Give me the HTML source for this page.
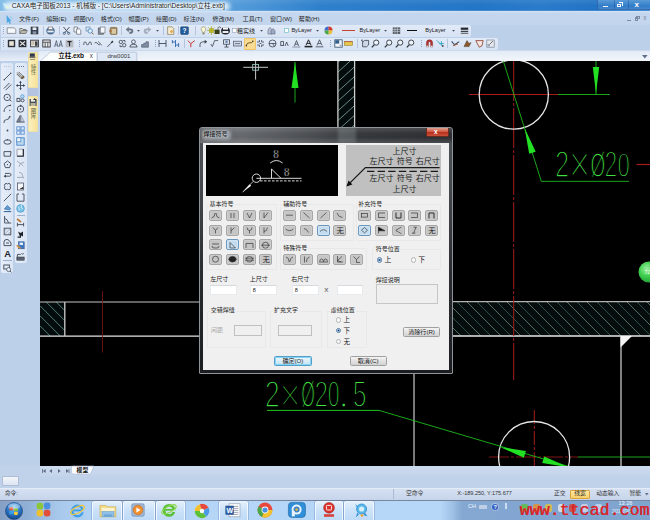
<!DOCTYPE html>
<html><head><meta charset="utf-8"><title>CAXA</title>
<style>
*{margin:0;padding:0;box-sizing:border-box}
html,body{width:650px;height:520px;overflow:hidden}
body{position:relative;background:#bdd0e9;font-family:"Liberation Sans","Noto Sans CJK SC",sans-serif;font-size:6px;color:#222;line-height:1}
.a{position:absolute}
.t{position:absolute;white-space:nowrap;line-height:1}
svg{position:absolute;overflow:visible}
#title{left:0;top:0;width:650px;height:12px;overflow:hidden;background:linear-gradient(rgba(255,255,255,.08),rgba(255,255,255,0) 45%,rgba(255,255,255,0) 80%,rgba(255,255,255,.35)),linear-gradient(90deg,#7db9e6 0,#6fb0e3 60px,#62a7df 200px,#4a94d6 260px,#2f80cc 320px,#2375c6 480px,#2a7bca 540px,#2273c5 600px,#2b7bca 650px)}
#menu{left:0;top:12px;width:650px;height:38px;background:#bcd0ea}
#tabs{left:0;top:50px;width:650px;height:11px;background:linear-gradient(#c9d7ec,#e8eff9)}
#left{left:0;top:61px;width:40px;height:415px;background:#bdd0e9}
#canvas{left:39.6px;top:61.1px;width:610.4px;height:405.2px;background:#000;overflow:hidden}
#bottom{left:0;top:466px;width:650px;height:34px;background:#bccbe4}
#task{left:0;top:500px;width:650px;height:20px;background:linear-gradient(90deg,#869fc4 0,#93b2d8 30px,#a9c9ec 60px,#b4d5f6 100px,#b6d7f7 440px,#a0c2e6 452px,#84a8d2 462px,#80a4cf 560px,#7fa5cf 650px)}
#dlg{left:199px;top:127px;width:254px;height:247px;overflow:hidden;background:linear-gradient(#4e5155 0,#45484c 25%,#2a2c2f 60%,#1b1d20 100%);border:1px solid #8f9499;border-radius:3px 3px 1px 1px}
#dtitle{left:0;top:0;width:252px;height:15px;background:linear-gradient(rgba(255,255,255,.14),rgba(255,255,255,.02) 35%,rgba(255,255,255,.0) 60%,rgba(255,255,255,.14)),linear-gradient(90deg,#585c60 0,#65696e 40px,#4a4d51 110px,#33363a 160px,#2b2d31 252px)}
#dcl{left:3px;top:15px;width:246.4px;height:226.6px;background:#f0f0f0}
.gb{position:absolute;border:1px solid #e8e8e8;border-radius:1px}
.sb{position:absolute;width:12.8px;height:11px;background:#c5c5c5;border:.9px solid #a6a6a6;border-radius:2px;box-shadow:inset 0 0 0 .6px #d2d2d2}
.sb.sel{background:#c4dcef;border-color:#6a97be;box-shadow:inset 0 0 0 .6px #dcebf6}
.inp{position:absolute;background:#fff;border:.7px solid #e8ebee;border-top-color:#d6dade}
.inp.dis{background:#f0f0f0;border:.9px solid #c0c0c0}
.btn{position:absolute;color:#1a1a1a;border:1px solid #a0a0a0;border-radius:1.5px;background:linear-gradient(#f4f4f4,#e2e2e2 50%,#d2d2d2);text-align:center}
.rad{position:absolute;width:5.2px;height:5.2px;margin:.2px;border-radius:50%;border:.7px solid #b0b3b6;background:#f8f8f8}
.rad.on{background:radial-gradient(circle,#1c3c66 0,#3f74ad 35%,#cfe0ef 60%,#eef3f8 100%);border-color:#5a7fa6}
</style></head><body>
<div id="title" class="a"></div>
<div id="menu" class="a"></div>
<div id="tabs" class="a"></div>
<div id="left" class="a"></div>
<div class="a" style="left:4px;top:1.6px;width:226px;height:9.6px;border-radius:5px;background:#fff;opacity:.8;filter:blur(2.2px)"></div><svg width="8" height="8" viewBox="0 0 8 8" style="left:2px;top:2px"><path d="M.6,1l3,6l1,-2l2,2l-1,-3l1.5,-1z" fill="#cfeefa"/><circle cx="5.5" cy="5.5" r="1.4" fill="#e8f6d8"/></svg><div class="t" style="left:11.8px;top:2.92px;font-size:6.57px;color:#222;text-shadow:0 0 2px #fff,0 0 3px #f4f8fc">CAXA电子图板2013 - 机械版 - [C:\Users\Administrator\Desktop\立柱.exb]</div><div class="a" style="left:597px;top:0;width:53px;height:9.5px;border:.8px solid rgba(30,80,150,.55);border-top:0;border-right:0;border-radius:0 0 0 3px;background:linear-gradient(#5a9ad8,#3c84cc 50%,#3079c4 52%,#3f88d0)"></div><div class="a" style="left:613.5px;top:0;width:.8px;height:9px;background:rgba(30,80,150,.45)"></div><div class="a" style="left:627.5px;top:0;width:.8px;height:9px;background:rgba(30,80,150,.45)"></div><div class="a" style="left:603px;top:5.5px;width:5px;height:1.6px;background:#f4f8ff"></div><div class="a" style="left:617px;top:3.6px;width:4.4px;height:3.6px;border:1px solid #f4f8ff"></div><div class="a" style="left:618.6px;top:2.2px;width:4.4px;height:3.6px;border:1px solid #f4f8ff;border-left:0;border-bottom:0"></div><div class="t" style="left:634.5px;top:0.60px;font-size:8px;color:#fff;font-weight:bold">x</div><div class="a" style="left:0;top:11.4px;width:650px;height:13.2px;background:linear-gradient(#d6e6f6 0,#c4d7ee 2px,#c2d5ec)"></div><svg width="9" height="10" viewBox="0 0 9 10" style="left:5px;top:13.5px"><path d="M1.5,1l5,6l-2,.3l1.5,2l-1.2,.6l-1.3,-2.2l-1.6,1.4z" fill="#4aa6e4"/><path d="M5,2.5l2.5,2" stroke="#7fcaf2" stroke-width="1"/></svg><div class="t" style="left:19px;top:15.55px;font-size:6.1px;color:#1e1e1e;">文件(F)</div><div class="t" style="left:46.2px;top:15.55px;font-size:6.1px;color:#1e1e1e;">编辑(E)</div><div class="t" style="left:73.4px;top:15.55px;font-size:6.1px;color:#1e1e1e;">视图(V)</div><div class="t" style="left:100.8px;top:15.55px;font-size:6.1px;color:#1e1e1e;">格式(O)</div><div class="t" style="left:128.4px;top:15.55px;font-size:6.1px;color:#1e1e1e;">幅面(P)</div><div class="t" style="left:156px;top:15.55px;font-size:6.1px;color:#1e1e1e;">绘图(D)</div><div class="t" style="left:183.6px;top:15.55px;font-size:6.1px;color:#1e1e1e;">标注(N)</div><div class="t" style="left:212.6px;top:15.55px;font-size:6.1px;color:#1e1e1e;">修改(M)</div><div class="t" style="left:242.6px;top:15.55px;font-size:6.1px;color:#1e1e1e;">工具(T)</div><div class="t" style="left:270px;top:15.55px;font-size:6.1px;color:#1e1e1e;">窗口(W)</div><div class="t" style="left:298.8px;top:15.55px;font-size:6.1px;color:#1e1e1e;">帮助(H)</div><div class="a" style="left:627px;top:19.6px;width:4.4px;height:1.2px;background:#7d8aa3"></div><div class="a" style="left:634.5px;top:17.2px;width:3.8px;height:3.4px;border:.8px solid #7d8aa3"></div><div class="a" style="left:636px;top:16px;width:3.8px;height:3.4px;border:.8px solid #7d8aa3"></div><div class="t" style="left:643.2px;top:15.00px;font-size:6.4px;color:#7d8aa3;">x</div><div class="a" style="left:1px;top:24.6px;width:470px;height:12px;background:linear-gradient(#e1eaf7,#d7e2f3);border-radius:0 2px 2px 0"></div><div class="a" style="left:1px;top:37.8px;width:497px;height:12px;background:linear-gradient(#e1eaf7,#d7e2f3);border-radius:0 2px 2px 0"></div><div class="a" style="left:3px;top:27px;width:1px;height:1px;background:#90a4c6"></div><div class="a" style="left:3px;top:29px;width:1px;height:1px;background:#90a4c6"></div><div class="a" style="left:3px;top:31px;width:1px;height:1px;background:#90a4c6"></div><div class="a" style="left:3px;top:33px;width:1px;height:1px;background:#90a4c6"></div><div class="a" style="left:3px;top:40px;width:1px;height:1px;background:#90a4c6"></div><div class="a" style="left:3px;top:42px;width:1px;height:1px;background:#90a4c6"></div><div class="a" style="left:3px;top:44px;width:1px;height:1px;background:#90a4c6"></div><div class="a" style="left:3px;top:46px;width:1px;height:1px;background:#90a4c6"></div><svg width="9" height="9" viewBox="0 0 9 9" style="left:7.0px;top:26.1px"><path d="M.2,1.8h6.8l1.8,1.6v4h-8.6z" fill="#f6f8fb" stroke="#7a808a" stroke-width=".8"/></svg><svg width="9" height="9" viewBox="0 0 9 9" style="left:18.5px;top:26.1px"><path d="M.8,7.5v-5h2.4l.8,1h3v1.2" fill="#e6e2cc" stroke="#5c6068" stroke-width=".8"/><path d="M.8,7.5l1.6,-3h6l-1.6,3z" fill="#b9b8a6" stroke="#5c6068" stroke-width=".7"/></svg><svg width="9" height="9" viewBox="0 0 9 9" style="left:30.1px;top:26.1px"><rect x="1" y="1" width="7" height="7" fill="#3c4656" stroke="#2a3240" stroke-width=".6"/><rect x="2.6" y="1.4" width="3.8" height="2.6" fill="#e8ecf2"/><rect x="2.8" y="5.4" width="3.4" height="2.4" fill="#8c96a6"/></svg><svg width="9" height="9" viewBox="0 0 9 9" style="left:45.9px;top:26.1px"><ellipse cx="4.5" cy="4.8" rx="4.2" ry="3.6" fill="#4a6c92"/><rect x="2.2" y="1" width="4.6" height="2.6" fill="#f4f6fa" stroke="#555" stroke-width=".5"/><rect x="1.4" y="4.6" width="6.2" height="1.8" fill="#e9eef5"/></svg><svg width="9" height="9" viewBox="0 0 9 9" style="left:61.5px;top:26.1px"><path d="M1.5,1l5,6M7.5,1l-5,6" stroke="#4b5360" stroke-width="1"/><circle cx="2.3" cy="7.3" r="1.1" fill="none" stroke="#33547a" stroke-width=".8"/><circle cx="6.7" cy="7.3" r="1.1" fill="none" stroke="#33547a" stroke-width=".8"/></svg><svg width="9" height="9" viewBox="0 0 9 9" style="left:73.3px;top:26.1px"><path d="M1,1h3.6v5h-3.6z" fill="#f4f6fa" stroke="#5c6672" stroke-width=".7"/><path d="M3.6,3h3l1.2,1.2v4h-4.2z" fill="#fff" stroke="#5c6672" stroke-width=".7"/></svg><svg width="9" height="9" viewBox="0 0 9 9" style="left:84.9px;top:26.1px"><rect x="1" y="1" width="4" height="4" fill="#cfe2f6" stroke="#5a7fa8" stroke-width=".6"/><circle cx="5.2" cy="5" r="2.2" fill="#dff0ff" stroke="#4a82b8" stroke-width=".8"/><path d="M6.8,6.6l1.6,1.8" stroke="#8a6a3a" stroke-width="1"/></svg><svg width="9" height="9" viewBox="0 0 9 9" style="left:96.5px;top:26.1px"><rect x="1.2" y="2" width="5.4" height="6.2" fill="#8a8f98" stroke="#4a4f58" stroke-width=".6"/><rect x="3.2" y="1" width="4.8" height="6" fill="#f6f7fa" stroke="#5c6672" stroke-width=".6"/></svg><svg width="9" height="9" viewBox="0 0 9 9" style="left:108.9px;top:26.1px"><rect x="1.2" y="1.4" width="6.8" height="7" rx="1" fill="#a58a5c" stroke="#6a5636" stroke-width=".6"/><rect x="2.6" y="3" width="4.4" height="4.8" fill="#d8c9a6"/><path d="M0,5h3" stroke="#b0662a" stroke-width="1"/></svg><svg width="9" height="9" viewBox="0 0 9 9" style="left:124.9px;top:26.1px"><path d="M1,3.6l2.6,-2.4v1.6h1.8q2.6,0 2.6,2.4q0,2.6 -3.4,2.4v-1.4q2,.2 2,-1.1q0,-1 -1.4,-1h-1.6v1.7z" fill="#6c7a8e" stroke="#46505e" stroke-width=".4"/></svg><svg width="9" height="9" viewBox="0 0 9 9" style="left:134.1px;top:26.1px"><path d="M3,4h3l-1.5,1.8z" fill="#4e5a6e"/></svg><svg width="9" height="9" viewBox="0 0 9 9" style="left:143.1px;top:26.1px"><path d="M8,3.6l-2.6,-2.4v1.6h-1.8q-2.6,0 -2.6,2.4q0,2.6 3.4,2.4v-1.4q-2,.2 -2,-1.1q0,-1 1.4,-1h1.6v1.7z" fill="#a9b3c2" stroke="#8893a3" stroke-width=".4"/></svg><svg width="9" height="9" viewBox="0 0 9 9" style="left:152.5px;top:26.1px"><path d="M3,4h3l-1.5,1.8z" fill="#4e5a6e"/></svg><svg width="9" height="9" viewBox="0 0 9 9" style="left:165.5px;top:26.1px"><path d="M1.6,.8h4.4l1.8,1.8v5.8h-6.2z" fill="#f3ead2" stroke="#8a7a56" stroke-width=".7"/><circle cx="5.6" cy="5.6" r="1.4" fill="#e6a23a"/></svg><svg width="9" height="9" viewBox="0 0 9 9" style="left:180.1px;top:26.1px"><rect x=".6" y=".8" width="7.8" height="7.6" rx=".8" fill="#1f5c9c" stroke="#123a66" stroke-width=".5"/><text x="2.6" y="7" font-size="6.6" font-weight="bold" fill="#fff" font-family="Liberation Sans,sans-serif">?</text></svg><svg width="9" height="9" viewBox="0 0 9 9" style="left:199.1px;top:26.1px"><path d="M4.5,.8a2.4,2.4 0 0 1 1.2,4.4v1.4h-2.4v-1.4a2.4,2.4 0 0 1 1.2,-4.4z" fill="#fdf8d8" stroke="#8a8450" stroke-width=".6"/><rect x="3.6" y="7" width="1.8" height="1.4" fill="#777"/></svg><svg width="9" height="9" viewBox="0 0 9 9" style="left:206.5px;top:26.1px"><circle cx="4.5" cy="4.5" r="2.2" fill="#e8e23a" stroke="#8a8a1a" stroke-width=".6"/><path d="M4.5,0v9M0,4.5h9M1.3,1.3l6.4,6.4M7.7,1.3l-6.4,6.4" stroke="#a8a820" stroke-width=".6"/></svg><svg width="9" height="9" viewBox="0 0 9 9" style="left:213.1px;top:26.1px"><rect x="1.6" y="3.6" width="5" height="4.4" fill="#3a3f1a"/><path d="M5,3.6v-1.4a1.4,1.4 0 0 1 2.8,0" fill="none" stroke="#555" stroke-width=".8"/></svg><svg width="9" height="9" viewBox="0 0 9 9" style="left:220.9px;top:26.1px"><ellipse cx="4.5" cy="4.8" rx="4.4" ry="3.8" fill="#20242a"/><rect x="2" y="1.2" width="5" height="2.4" fill="#f4f6fa"/><rect x="1.6" y="5" width="5.8" height="2" fill="#e9eef5"/></svg><svg width="9" height="9" viewBox="0 0 9 9" style="left:229.5px;top:26.1px"><rect x="2.4" y="2.4" width="4.2" height="4.2" fill="#fff" stroke="#8fa0b8" stroke-width=".6"/></svg><svg width="9" height="9" viewBox="0 0 9 9" style="left:256.9px;top:26.1px"><path d="M3,4h3l-1.5,1.8z" fill="#4e5a6e"/></svg><svg width="9" height="9" viewBox="0 0 9 9" style="left:267.1px;top:26.1px"><path d="M1,8v-4l2,-2.6l2,2.6v4z" fill="#b9c4d6" stroke="#5a6880" stroke-width=".6"/><path d="M4,8v-3.4l2,-2l2,2v3.4z" fill="#9dabc2" stroke="#5a6880" stroke-width=".6"/></svg><svg width="9" height="9" viewBox="0 0 9 9" style="left:282.1px;top:26.1px"><rect x="2.4" y="2.4" width="4.2" height="4.2" fill="#fff" stroke="#6fc0c8" stroke-width=".7"/></svg><svg width="9" height="9" viewBox="0 0 9 9" style="left:313.1px;top:26.1px"><path d="M3,4h3l-1.5,1.8z" fill="#4e5a6e"/></svg><svg width="9" height="9" viewBox="0 0 9 9" style="left:324.1px;top:26.1px"><circle cx="4.5" cy="4.5" r="4" fill="#d8d8d8"/><path d="M4.5,4.5l-4,0a4,4 0 0 1 4,-4z" fill="#3f6ed0"/><path d="M4.5,4.5l0,-4a4,4 0 0 1 4,4z" fill="#d23c2e"/><path d="M4.5,4.5l4,0a4,4 0 0 1 -4,4z" fill="#e8c23a"/><path d="M4.5,4.5l0,4a4,4 0 0 1 -4,-4z" fill="#48a84a"/></svg><svg width="9" height="9" viewBox="0 0 9 9" style="left:381.1px;top:26.1px"><path d="M3,4h3l-1.5,1.8z" fill="#4e5a6e"/></svg><svg width="9" height="9" viewBox="0 0 9 9" style="left:391.5px;top:26.1px"><rect x=".8" y="1.4" width="7.4" height="6.6" fill="#555c66"/><path d="M.8,3.4h7.4M.8,5.4h7.4M3,1.4v6.6M5.4,1.4v6.6" stroke="#cfd6e0" stroke-width=".6"/></svg><svg width="9" height="9" viewBox="0 0 9 9" style="left:449.1px;top:26.1px"><path d="M3,4h3l-1.5,1.8z" fill="#4e5a6e"/></svg><svg width="9" height="9" viewBox="0 0 9 9" style="left:459.5px;top:26.1px"><rect x=".8" y="1.6" width="7.4" height="2.2" fill="#23272e"/><rect x=".8" y="4.8" width="7.4" height="1.4" fill="#3a3f48"/><rect x=".8" y="7" width="7.4" height=".8" fill="#555"/></svg><div class="a" style="left:43px;top:26px;width:1px;height:9px;background:#b4c4de"></div><div class="a" style="left:59px;top:26px;width:1px;height:9px;background:#b4c4de"></div><div class="a" style="left:120.6px;top:26px;width:1px;height:9px;background:#b4c4de"></div><div class="a" style="left:163px;top:26px;width:1px;height:9px;background:#b4c4de"></div><div class="a" style="left:177.6px;top:26px;width:1px;height:9px;background:#b4c4de"></div><div class="a" style="left:194.6px;top:26px;width:1px;height:9px;background:#b4c4de"></div><div class="t" style="left:237px;top:27.70px;font-size:6px;color:#1a1a1a;">粗实线</div><div class="t" style="left:291.4px;top:27.90px;font-size:5.6px;color:#1a1a1a;">ByLayer</div><div class="a" style="left:342px;top:30.2px;width:13.4px;height:1px;background:#c2452e"></div><div class="t" style="left:359.6px;top:27.90px;font-size:5.6px;color:#1a1a1a;">ByLayer</div><div class="a" style="left:407px;top:29.8px;width:9.6px;height:1.6px;background:#111"></div><div class="t" style="left:425.2px;top:27.90px;font-size:5.6px;color:#1a1a1a;">ByLayer</div>
<div class="a" style="left:243.6px;top:38.2px;width:12px;height:11.4px;background:#f9dc92;border:1px solid #efc468;border-radius:1px"></div><svg width="9" height="9" viewBox="0 0 9 9" style="left:6.9px;top:39.3px"><rect x=".8" y=".8" width="7.4" height="7.4" fill="#2b2f36"/><rect x="2.2" y="2.2" width="4.6" height="4.6" fill="#e9e4d8"/></svg><svg width="9" height="9" viewBox="0 0 9 9" style="left:18.3px;top:39.3px"><rect x=".6" y=".8" width="7.8" height="7.4" fill="#2b2f36"/><path d="M2,2.4l5,4.2M7,2.4l-5,4.2" stroke="#f0f0f0" stroke-width="1.2"/></svg><svg width="9" height="9" viewBox="0 0 9 9" style="left:29.7px;top:39.3px"><rect x=".6" y="1.2" width="7.8" height="6.6" fill="#e8e4dc" stroke="#33373e" stroke-width=".9"/><rect x="5" y="2.4" width="2.6" height="4.4" fill="#3a3f48"/><path d="M1.4,3h3M1.4,5h3" stroke="#8a7a5a" stroke-width=".7"/></svg><svg width="9" height="9" viewBox="0 0 9 9" style="left:42.3px;top:39.3px"><rect x=".8" y="1" width="7.4" height="7" fill="#f2f2f2" stroke="#33373e" stroke-width=".9"/><path d="M.8,3.2h7.4M3.2,3.2v4.8M5.8,3.2v4.8" stroke="#33373e" stroke-width=".8"/></svg><svg width="9" height="9" viewBox="0 0 9 9" style="left:53.7px;top:39.3px"><path d="M.6,8l1.8,-6.4l1.6,6.4M1.2,6h2.2M5,8l1.8,-6.4l1.6,6.4M5.6,6h2.2" stroke="#3a465a" stroke-width=".7" fill="none"/></svg><svg width="9" height="9" viewBox="0 0 9 9" style="left:65.0px;top:39.3px"><rect x=".6" y=".8" width="7.8" height="7.6" fill="#b9bcc2"/><path d="M2.4,2.6h4.2M4.5,2.6v4.6" stroke="#22262c" stroke-width="1.1"/></svg><svg width="9" height="9" viewBox="0 0 9 9" style="left:83.2px;top:39.3px"><path d="M.8,6v-1.6q0,-1.4 1.3,-1.4q1.3,0 1.3,1.4v0q0,1.4 1.2,1.4q1.2,0 1.2,-1.4q0,-1.4 1.3,-1.4q1.2,0 1.2,1.4v1.6" stroke="#3a4250" fill="none" stroke-width=".8"/></svg><svg width="9" height="9" viewBox="0 0 9 9" style="left:94.3px;top:39.3px"><path d="M.6,4q1.6,-1.2 2.6,0l1,1.4q1,1 2,0M4.2,2.6l3.6,3.6" stroke="#3a4250" fill="none" stroke-width=".8"/></svg><svg width="9" height="9" viewBox="0 0 9 9" style="left:105.9px;top:39.3px"><path d="M1.4,7.8l3,-3" stroke="#3a4250" stroke-width=".9"/><path d="M4,5l2.2,-3.4l1.4,1.4z" fill="#22262c"/></svg><svg width="9" height="9" viewBox="0 0 9 9" style="left:117.5px;top:39.3px"><circle cx="2.8" cy="3" r="1.7" stroke="#3a4250" fill="none" stroke-width=".8"/><circle cx="6.2" cy="6.2" r="1.7" stroke="#3a4250" fill="none" stroke-width=".8"/><path d="M4.6,1.6h2.4v1.8M4.4,7.6h-2.4v-1.6" stroke="#3a4250" fill="none" stroke-width=".8"/></svg><svg width="9" height="9" viewBox="0 0 9 9" style="left:129.0px;top:39.3px"><circle cx="4.5" cy="2.8" r="1.9" stroke="#3a4250" fill="none" stroke-width=".8"/><path d="M.8,8q.2,-2.8 3.7,-2.8q3.5,0 3.7,2.8z" stroke="#3a4250" fill="none" stroke-width=".8"/></svg><svg width="9" height="9" viewBox="0 0 9 9" style="left:141.3px;top:39.3px"><path d="M.6,5.6h2.2v-1.4h2.2v-1.4h2.4v5.4h-6.8z" fill="#7f8da4" stroke="#4a5468" stroke-width=".6"/></svg><svg width="9" height="9" viewBox="0 0 9 9" style="left:158.2px;top:39.3px"><path d="M1,1v7M8,1v7M1,4.5h7" stroke="#3a4a60" stroke-width=".9" fill="none"/></svg><svg width="9" height="9" viewBox="0 0 9 9" style="left:171.3px;top:39.3px"><path d="M1.4,1v3.4M4.5,1v7M7.6,4v4M1.4,3h3M4.5,6h3.2" stroke="#2f66b0" stroke-width=".9" fill="none"/></svg><svg width="9" height="9" viewBox="0 0 9 9" style="left:186.5px;top:39.3px"><path d="M.8,1.6l3,3l4,-3M3.8,4.6v3.6" stroke="#c8372f" stroke-width="1" fill="none"/></svg><svg width="9" height="9" viewBox="0 0 9 9" style="left:198.5px;top:39.3px"><path d="M1,8v-2.6q0,-2.6 3,-2.6h2" stroke="#3a4250" fill="none" stroke-width=".8"/><path d="M5.6,.8l2.6,2l-2.6,2z" fill="#3a4250"/></svg><svg width="9" height="9" viewBox="0 0 9 9" style="left:210.1px;top:39.3px"><path d="M.8,5l1.6,2.6l2.2,-6h3.6" stroke="#3a4250" fill="none" stroke-width=".8"/></svg><svg width="9" height="9" viewBox="0 0 9 9" style="left:221.5px;top:39.3px"><rect x="1.6" y=".8" width="5.8" height="4.4" fill="#dfe6f0" stroke="#3a4250" stroke-width=".8"/><path d="M4.5,5.2v2.4M2.4,8h4.2" stroke="#3a4250" stroke-width=".9"/><rect x="3.4" y="1.8" width="2.2" height="2" fill="#5a7fb0"/></svg><svg width="9" height="9" viewBox="0 0 9 9" style="left:233.2px;top:39.3px"><rect x=".6" y="2.2" width="7.8" height="4.8" fill="#cdd6e4" stroke="#4a5468" stroke-width=".7"/><path d="M2,4.6h5" stroke="#4a5468" stroke-width=".7"/></svg><svg width="9" height="9" viewBox="0 0 9 9" style="left:244.9px;top:39.3px"><path d="M1,7q1,-3.6 3.4,-3.2q2,.6 3.8,-1.6" stroke="#5a4a1a" stroke-width=".9" fill="none"/><circle cx="1.4" cy="6.8" r=".7" fill="#333"/><circle cx="7.8" cy="2.2" r=".7" fill="#333"/></svg><svg width="9" height="9" viewBox="0 0 9 9" style="left:256.3px;top:39.3px"><path d="M1,3h2.4v-2M8,3h-2.4v-2M1,6h2.4v2M8,6h-2.4v2M3.6,4.5h1.8" stroke="#3a4250" fill="none" stroke-width=".8"/></svg><svg width="9" height="9" viewBox="0 0 9 9" style="left:267.8px;top:39.3px"><circle cx="4.5" cy="4.5" r="3.5" stroke="#3a4250" fill="none" stroke-width=".8"/><path d="M1,4.5h7M4.5,4.5l2,3" stroke="#3a4250" fill="none" stroke-width=".8"/></svg><svg width="9" height="9" viewBox="0 0 9 9" style="left:280.1px;top:39.3px"><rect x=".8" y="2.6" width="2.6" height="4" stroke="#3a4250" fill="none" stroke-width=".8"/><path d="M5,7l1.6,-4l1.6,4" stroke="#3a4250" fill="none" stroke-width=".8"/></svg><svg width="9" height="9" viewBox="0 0 9 9" style="left:292.0px;top:39.3px"><path d="M2.4,7l2.1,-5.4l2.1,5.4M3.2,5.2h2.6" stroke="#3a4250" fill="none" stroke-width=".8"/><path d="M.4,8h8" stroke="#3a4250" stroke-width=".5"/></svg><svg width="9" height="9" viewBox="0 0 9 9" style="left:303.5px;top:39.3px"><path d="M2,6.2l2.5,-5.4l2.5,5.4M3,4.4h3" stroke="#22262c" stroke-width="1" fill="none"/><rect x=".6" y="6.8" width="7.8" height="1.6" fill="#22262c"/></svg><svg width="9" height="9" viewBox="0 0 9 9" style="left:315.1px;top:39.3px"><path d="M2,6.4l2.5,-5.6l2.5,5.6M3,4.6h3" stroke="#3a4250" fill="none" stroke-width=".8"/><path d="M.6,7.8h7.8" stroke="#3a4250" stroke-width=".8"/></svg><svg width="9" height="9" viewBox="0 0 9 9" style="left:333.5px;top:39.3px"><rect x=".8" y=".8" width="7.4" height="7.4" fill="#f0f3f8" stroke="#33506e" stroke-width=".8"/><rect x="1.2" y="1.2" width="4" height="3.4" fill="#2f5f8a"/><path d="M5.6,6.4h1.8" stroke="#555" stroke-width=".6"/></svg><svg width="9" height="9" viewBox="0 0 9 9" style="left:344.3px;top:39.3px"><rect x=".4" y="2.6" width="8.2" height="3.8" fill="#e8c84a" stroke="#8a7420" stroke-width=".5"/><path d="M.4,2.6h8.2" stroke="#b03a2a" stroke-width=".6"/></svg><svg width="9" height="9" viewBox="0 0 9 9" style="left:360.5px;top:39.3px"><path d="M1.6,3l2,-1.6h4v4.6l-2,1.8h-4z" fill="#cfd8e6" stroke="#3a4250" stroke-width=".8"/><path d="M.4,1.4l2,1.4M1,.4v2" stroke="#3a4250" stroke-width=".8"/></svg><svg width="9" height="9" viewBox="0 0 9 9" style="left:371.3px;top:39.3px"><circle cx="5.2" cy="3.6" r="2.6" fill="#eef4fb" stroke="#2f3640" stroke-width=".9"/><path d="M3.4,5.6l-2.6,2.8" stroke="#2f3640" stroke-width="1.3"/></svg><svg width="9" height="9" viewBox="0 0 9 9" style="left:383.8px;top:39.3px"><circle cx="5.2" cy="3.6" r="2.6" fill="#eef4fb" stroke="#2f3640" stroke-width=".9"/><path d="M3.4,5.6l-2.6,2.8" stroke="#2f3640" stroke-width="1.3"/></svg><svg width="9" height="9" viewBox="0 0 9 9" style="left:394.5px;top:39.3px"><circle cx="5.2" cy="3.6" r="2.6" fill="#eef4fb" stroke="#2f3640" stroke-width=".9"/><path d="M3.4,5.6l-2.6,2.8" stroke="#2f3640" stroke-width="1.3"/></svg><svg width="9" height="9" viewBox="0 0 9 9" style="left:406.0px;top:39.3px"><circle cx="5.2" cy="3.6" r="2.6" fill="#eef4fb" stroke="#2f3640" stroke-width=".9"/><path d="M3.4,5.6l-2.6,2.8" stroke="#2f3640" stroke-width="1.3"/></svg><svg width="9" height="9" viewBox="0 0 9 9" style="left:425.0px;top:39.3px"><path d="M1.4,8v-4.2a3.1,3.1 0 0 1 6.2,0v4.2h-2v-4.2a1.1,1.1 0 0 0 -2.2,0v4.2z" fill="#b8332e" stroke="#6a1a18" stroke-width=".4"/><rect x="1.4" y="6.6" width="2" height="1.6" fill="#ddd"/><rect x="5.6" y="6.6" width="2" height="1.6" fill="#ddd"/></svg><svg width="9" height="9" viewBox="0 0 9 9" style="left:435.5px;top:39.3px"><path d="M.8,1.4l4,4M5.4,2.2v4.6M3.2,4.6h4.6" stroke="#3aa8c8" stroke-width="1" fill="none"/><path d="M6,6l2.4,1l-2.4,1z" fill="#333"/></svg><svg width="9" height="9" viewBox="0 0 9 9" style="left:451.2px;top:39.3px"><path d="M.6,2.4l3,3.4l4.6,-3.2" stroke="#33506e" stroke-width="1.1" fill="none"/><path d="M2,6.8l5,-2" stroke="#a85a2a" stroke-width="1"/></svg><svg width="9" height="9" viewBox="0 0 9 9" style="left:463.2px;top:39.3px"><path d="M1,7.6l3,-6l2,3l2,-1l-2,4z" fill="#8a5a2a" stroke="#4a3a2a" stroke-width=".5"/></svg><svg width="9" height="9" viewBox="0 0 9 9" style="left:475.2px;top:39.3px"><path d="M.8,1.6h7.4l-1.4,5.4l-2.6,1.2z" fill="#f3e6e0" stroke="#8a3a2a" stroke-width=".8"/></svg><svg width="9" height="9" viewBox="0 0 9 9" style="left:486.3px;top:39.3px"><rect x=".8" y="1" width="7.4" height="7.2" fill="#e6e9ee" stroke="#7a8698" stroke-width=".7"/><path d="M4,5l3,-3" stroke="#555" stroke-width=".8"/><rect x="1.4" y="5" width="2.6" height="2.4" fill="#9aa4b4"/></svg><div class="a" style="left:183.5px;top:39.4px;width:1px;height:9px;background:#b4c4de"></div><div class="a" style="left:356.5px;top:39.4px;width:1px;height:9px;background:#b4c4de"></div><div class="a" style="left:447.4px;top:39.4px;width:1px;height:9px;background:#b4c4de"></div><div class="a" style="left:79px;top:40.4px;width:1px;height:1px;background:#90a4c6"></div><div class="a" style="left:79px;top:42.4px;width:1px;height:1px;background:#90a4c6"></div><div class="a" style="left:79px;top:44.4px;width:1px;height:1px;background:#90a4c6"></div><div class="a" style="left:79px;top:46.4px;width:1px;height:1px;background:#90a4c6"></div><div class="a" style="left:154.7px;top:40.4px;width:1px;height:1px;background:#90a4c6"></div><div class="a" style="left:154.7px;top:42.4px;width:1px;height:1px;background:#90a4c6"></div><div class="a" style="left:154.7px;top:44.4px;width:1px;height:1px;background:#90a4c6"></div><div class="a" style="left:154.7px;top:46.4px;width:1px;height:1px;background:#90a4c6"></div><div class="a" style="left:329.6px;top:40.4px;width:1px;height:1px;background:#90a4c6"></div><div class="a" style="left:329.6px;top:42.4px;width:1px;height:1px;background:#90a4c6"></div><div class="a" style="left:329.6px;top:44.4px;width:1px;height:1px;background:#90a4c6"></div><div class="a" style="left:329.6px;top:46.4px;width:1px;height:1px;background:#90a4c6"></div><div class="a" style="left:421px;top:40.4px;width:1px;height:1px;background:#90a4c6"></div><div class="a" style="left:421px;top:42.4px;width:1px;height:1px;background:#90a4c6"></div><div class="a" style="left:421px;top:44.4px;width:1px;height:1px;background:#90a4c6"></div><div class="a" style="left:421px;top:46.4px;width:1px;height:1px;background:#90a4c6"></div>
<div class="a" style="left:39px;top:50.6px;width:611px;height:10.6px;background:linear-gradient(#e2ebf6,#f3f6fb)"></div><svg width="100" height="11" viewBox="39 50.6 100 11" style="left:39px;top:50.6px"><path d="M97.2,61.2v-8q0,-1.4 1.4,-1.4h36.6q1.6,0 1.6,1.4v8z" fill="#dfe8f5" stroke="#a9b9d3" stroke-width=".7"/><path d="M39.6,61.3l9.6,-8.6q1,-1 2.6,-1h43.6q1.6,0 1.6,1.4v8.2z" fill="#fdfefe" stroke="#a9b9d3" stroke-width=".7"/></svg><div class="t" style="left:58.2px;top:53.10px;font-size:6.6px;color:#111;font-weight:bold;letter-spacing:-.1px">立柱.exb</div><div class="t" style="left:89.8px;top:53.00px;font-size:6.4px;color:#444;">x</div><div class="t" style="left:107.4px;top:53.40px;font-size:6px;color:#333;">drw0001</div><svg width="6" height="4" viewBox="0 0 6 4" style="left:641.6px;top:55px"><path d="M0,0h5.6l-2.8,3.4z" fill="#5f6f8c"/></svg>
<div class="a" style="left:1.4px;top:63.4px;width:11.8px;height:209.6px;background:linear-gradient(90deg,#e6edf8,#dbe5f4);border-radius:2px"></div><div class="a" style="left:15px;top:63.4px;width:11.8px;height:199.6px;background:linear-gradient(90deg,#e6edf8,#dbe5f4);border-radius:2px"></div><div class="a" style="left:3.6px;top:66px;width:1px;height:1px;background:#b4c2da"></div><div class="a" style="left:17.4px;top:66px;width:1px;height:1px;background:#5f7396"></div><div class="a" style="left:5.6px;top:66px;width:1px;height:1px;background:#b4c2da"></div><div class="a" style="left:19.4px;top:66px;width:1px;height:1px;background:#5f7396"></div><div class="a" style="left:7.6px;top:66px;width:1px;height:1px;background:#b4c2da"></div><div class="a" style="left:21.4px;top:66px;width:1px;height:1px;background:#5f7396"></div><div class="a" style="left:9.6px;top:66px;width:1px;height:1px;background:#b4c2da"></div><div class="a" style="left:23.4px;top:66px;width:1px;height:1px;background:#5f7396"></div><div class="a" style="left:27.6px;top:51.6px;width:10.6px;height:36.4px;background:linear-gradient(90deg,#fbf0bd,#f6e29a);border:.6px solid #efe0a4;border-radius:1px"></div><div class="a" style="left:27.6px;top:88px;width:10.6px;height:8px;background:#b3c3e0"></div><div class="a" style="left:27.6px;top:95.6px;width:10.6px;height:36px;background:linear-gradient(90deg,#fbf0bd,#f6e29a);border:.6px solid #efe0a4;border-radius:1px"></div><svg width="7" height="8" viewBox="0 0 7 8" style="left:29.4px;top:53px"><rect x=".8" y=".4" width="5" height="3.4" fill="#2e3a4e"/><rect x=".4" y="3.8" width="6" height="1" fill="#555"/><path d="M1,6.4h5" stroke="#777" stroke-width=".8"/></svg><div class="t" style="left:30px;top:64px;font-size:5.4px;color:#6a6f4a;writing-mode:vertical-rl;letter-spacing:-.2px">特性</div><svg width="8" height="9" viewBox="0 0 8 9" style="left:28.8px;top:98px"><rect x=".6" y="1" width="7" height="7" fill="#4a505c"/><rect x="2" y="1" width="4" height="2.6" fill="#f1f1e6"/><rect x="1.6" y="5" width="5" height="3" fill="#b9b49a"/><path d="M5.6,0l1.6,2h-3.2z" fill="#333"/></svg><div class="t" style="left:30px;top:108px;font-size:5.4px;color:#5a5f4a;writing-mode:vertical-rl;letter-spacing:-.2px">图库</div><svg width="9" height="9" viewBox="0 0 9 9" style="left:2.8px;top:72.0px"><path d="M1,8l7,-7" stroke="#485060" fill="none" stroke-width=".95"/><circle cx="1.2" cy="7.8" r=".7" fill="#3e4656"/><circle cx="7.8" cy="1.2" r=".7" fill="#3e4656"/></svg><svg width="9" height="9" viewBox="0 0 9 9" style="left:2.8px;top:81.5px"><path d="M.8,6.6l5.6,-5.6M2.6,8.2l5.6,-5.6" stroke="#485060" fill="none" stroke-width=".95"/></svg><svg width="9" height="9" viewBox="0 0 9 9" style="left:2.8px;top:92.7px"><circle cx="4.2" cy="4.4" r="3.2" stroke="#485060" fill="none" stroke-width=".95"/><circle cx="4.2" cy="4.4" r=".6" fill="#3e4656"/><path d="M6.8,6.8l1.6,1.6" stroke="#485060" fill="none" stroke-width=".95"/></svg><svg width="9" height="9" viewBox="0 0 9 9" style="left:2.8px;top:104.1px"><path d="M1,8q0,-5.6 6.6,-6.8" stroke="#485060" fill="none" stroke-width=".95"/><circle cx="7.4" cy="1.4" r=".7" fill="#3e4656"/><circle cx="6.8" cy="6.4" r=".6" fill="#3e4656"/></svg><svg width="9" height="9" viewBox="0 0 9 9" style="left:2.8px;top:115.0px"><path d="M1,8q-.6,-3.4 2.6,-3.4q3,0 2.8,-3.2" stroke="#485060" fill="none" stroke-width=".95" stroke-width="1.4"/><path d="M6,1l2,.8l-1.6,1.2z" fill="#3e4656"/></svg><svg width="9" height="9" viewBox="0 0 9 9" style="left:2.8px;top:125.5px"><circle cx="4.5" cy="4.5" r=".9" fill="#3e4656"/></svg><svg width="9" height="9" viewBox="0 0 9 9" style="left:2.8px;top:136.5px"><ellipse cx="4.5" cy="5" rx="3.6" ry="2.2" stroke="#485060" fill="none" stroke-width=".95"/><circle cx="4.5" cy="2.8" r=".7" fill="#3e4656"/></svg><svg width="9" height="9" viewBox="0 0 9 9" style="left:2.8px;top:148.5px"><path d="M1,2.6h7l-.6,4.6h-6.4z" stroke="#485060" fill="none" stroke-width=".95"/></svg><svg width="9" height="9" viewBox="0 0 9 9" style="left:2.8px;top:160.0px"><path d="M4.5,1l3.4,2.6l-1.3,4h-4.2l-1.3,-4z" stroke="#485060" fill="none" stroke-width=".95"/><circle cx="4.5" cy="4.6" r=".6" fill="#3e4656"/></svg><svg width="9" height="9" viewBox="0 0 9 9" style="left:2.8px;top:171.0px"><path d="M2,2.4h4.6q1.4,0 1.4,1.4t-1.4,1.4h-5" stroke="#485060" fill="none" stroke-width=".95" stroke-width="1"/><path d="M3,3.6l-2.4,1.6l2.4,1.6z" fill="#3e4656"/></svg><svg width="9" height="9" viewBox="0 0 9 9" style="left:2.8px;top:181.5px"><path d="M2,2q1,-1.4 2.5,0q1.5,-1.4 2.5,0q1.4,1.2 0,2.6q1.4,1.4 0,2.6q-1,1.2 -2.5,0q-1.5,1.2 -2.5,0q-1.4,-1.2 0,-2.6q-1.4,-1.4 0,-2.6z" stroke="#485060" fill="none" stroke-width=".95"/></svg><svg width="9" height="9" viewBox="0 0 9 9" style="left:2.8px;top:192.5px"><path d="M.8,8.2l7.4,-7.4" stroke="#485060" fill="none" stroke-width=".95"/></svg><svg width="9" height="9" viewBox="0 0 9 9" style="left:2.8px;top:204.3px"><path d="M1.4,5l3,-3.6l3.2,3.2l-1,1.4z" fill="#5f9ed8" stroke="#2f5f94" stroke-width=".6"/><path d="M.8,7.6h7.4" stroke="#2f5f94" stroke-width="1"/></svg><svg width="9" height="9" viewBox="0 0 9 9" style="left:2.8px;top:215.3px"><path d="M1.6,1v7h6.6M1.6,3.4q3,.6 4,4.6" stroke="#485060" fill="none" stroke-width=".95"/></svg><svg width="9" height="9" viewBox="0 0 9 9" style="left:2.8px;top:226.5px"><rect x="1.2" y="1.2" width="6.6" height="6.6" stroke="#485060" fill="none" stroke-width=".95"/><path d="M1.2,4.4l3.2,-3.2M1.2,7.6l6.4,-6.4M4.4,7.8l3.4,-3.4" stroke="#7a8496" stroke-width=".6"/></svg><svg width="9" height="9" viewBox="0 0 9 9" style="left:2.8px;top:238.2px"><path d="M1,7.6v-3.6q0,-2.6 3,-2.6q2,0 4,3.6v2.6z" stroke="#485060" fill="none" stroke-width=".95"/><path d="M3,5h3" stroke="#485060" fill="none" stroke-width=".95"/></svg><svg width="9" height="9" viewBox="0 0 9 9" style="left:2.8px;top:249.0px"><text x="1.2" y="8" font-size="9.4" font-weight="bold" fill="#1e222a" font-family="Liberation Sans,sans-serif">A</text></svg><svg width="9" height="9" viewBox="0 0 9 9" style="left:2.8px;top:264.1px"><rect x=".8" y="1" width="5.6" height="4" stroke="#485060" fill="none" stroke-width=".95"/><circle cx="5.6" cy="5.6" r="2" fill="#e8eef8" stroke="#3e4656" stroke-width=".7"/><path d="M7,7l1.4,1.4" stroke="#485060" fill="none" stroke-width=".95"/></svg><div class="a" style="left:3px;top:260.4px;width:8.6px;height:.8px;background:#9fb0cf"></div><svg width="9" height="9" viewBox="0 0 9 9" style="left:16.4px;top:71.2px"><path d="M1,1.4l4.4,4.4M2.6,.8l4.2,4.2M.8,3l3.6,3.6" stroke="#4a4436" stroke-width=".8"/><path d="M4.2,7l3.6,-2.6l.8,2l-2.4,1.8z" fill="#6a5a3a"/></svg><svg width="9" height="9" viewBox="0 0 9 9" style="left:16.4px;top:81.2px"><path d="M4.5,.6v7.8M.6,4.5h7.8" stroke="#485060" fill="none" stroke-width=".95" stroke-width="1"/><path d="M4.5,0l1.4,1.8h-2.8zM4.5,9l1.4,-1.8h-2.8zM0,4.5l1.8,-1.4v2.8zM9,4.5l-1.8,-1.4v2.8z" fill="#2f3f5e"/></svg><svg width="9" height="9" viewBox="0 0 9 9" style="left:16.4px;top:93.5px"><circle cx="6.4" cy="2.4" r="1.7" fill="#bfe0f8" stroke="#3a8ad0" stroke-width=".7"/><rect x="1" y="4.4" width="3" height="3" stroke="#485060" fill="none" stroke-width=".95"/><circle cx="6.6" cy="6.4" r="1.5" stroke="#485060" fill="none" stroke-width=".95"/></svg><svg width="9" height="9" viewBox="0 0 9 9" style="left:16.4px;top:103.7px"><circle cx="4.5" cy="5" r="3.2" stroke="#485060" fill="none" stroke-width=".95"/><circle cx="4.5" cy="5" r=".8" fill="#3e4656"/><path d="M4,.6l2,1.2l-2,1.2z" fill="#3e4656"/></svg><svg width="9" height="9" viewBox="0 0 9 9" style="left:16.4px;top:114.3px"><path d="M4.3,1.2v6.4l-3.6,0z" fill="#7a8698" stroke="#3e4656" stroke-width=".6"/><path d="M4.9,1.2v6.4l3.4,0z" fill="#c9d2e0" stroke="#6a7488" stroke-width=".5"/><path d="M.4,8.2h8.2" stroke="#3e4656" stroke-width=".7"/></svg><svg width="9" height="9" viewBox="0 0 9 9" style="left:16.4px;top:125.5px"><rect x=".8" y=".8" width="3.2" height="3.2" fill="#e8f0fa" stroke="#5a8fd2" stroke-width=".9"/><rect x="5" y=".8" width="3.2" height="3.2" fill="#e8f0fa" stroke="#5a8fd2" stroke-width=".9"/><rect x=".8" y="5" width="3.2" height="3.2" fill="#e8f0fa" stroke="#5a8fd2" stroke-width=".9"/><rect x="5" y="5" width="3.2" height="3.2" fill="#e8f0fa" stroke="#5a8fd2" stroke-width=".9"/></svg><svg width="9" height="9" viewBox="0 0 9 9" style="left:16.4px;top:137.0px"><rect x=".8" y=".8" width="7.4" height="7.4" fill="#bcd8f0" stroke="#4a88c8" stroke-width=".9"/><rect x=".8" y=".8" width="4" height="4" fill="#f2f7fc" stroke="#4a88c8" stroke-width=".7"/></svg><svg width="9" height="9" viewBox="0 0 9 9" style="left:16.4px;top:147.8px"><path d="M1,1.2h6v6.6h-6z" fill="#f2f4f8" stroke="#6a7488" stroke-width=".6"/><path d="M7.4,1v7.2h-6.4" stroke="#2a2e36" stroke-width="1.1" fill="none"/></svg><svg width="9" height="9" viewBox="0 0 9 9" style="left:16.4px;top:159.3px"><path d="M1,2l3.4,2.4l3.6,-1M4.4,4.4l-1.4,3.4M4.4,4.4l3,2.6" stroke="#8a94a6" fill="none" stroke-width=".7"/></svg><svg width="9" height="9" viewBox="0 0 9 9" style="left:16.4px;top:169.5px"><path d="M1,7.4h6M3,2.4l2.6,.6l2,5.4" stroke="#8a94a6" fill="none" stroke-width=".7"/></svg><svg width="9" height="9" viewBox="0 0 9 9" style="left:16.4px;top:181.5px"><rect x="1.4" y="1" width="6" height="7" fill="#f4f6fa" stroke="#4e5668" stroke-width=".8"/><path d="M4.4,6.6h2.4v-1.4" stroke="#222" stroke-width="1"/></svg><svg width="9" height="9" viewBox="0 0 9 9" style="left:16.4px;top:192.5px"><path d="M3,1h-2v7.2h7v-7.2h-2" stroke="#485060" fill="none" stroke-width=".95" stroke-width="1"/></svg><svg width="9" height="9" viewBox="0 0 9 9" style="left:16.4px;top:204.3px"><circle cx="4.5" cy="4.5" r="3.8" fill="#7cc4ea" stroke="#2f88c0" stroke-width=".6"/><path d="M2,2.6q2,1.6 1,4M5.4,1q-1,3 1.8,4.4" stroke="#e6f4fc" stroke-width=".8" fill="none"/></svg><svg width="9" height="9" viewBox="0 0 9 9" style="left:16.4px;top:218.2px"><path d="M1,1l4,3" stroke="#b8763a" stroke-width="1.6"/><path d="M1.4,4.8v3.6M7.6,4.8v3.6M1.4,6.6h6.2" stroke="#485060" fill="none" stroke-width=".95"/></svg><svg width="9" height="9" viewBox="0 0 9 9" style="left:16.4px;top:229.7px"><path d="M2,1.4l2.5,1.6l2.5,-1.6v5l-2,-1v2.4h-3.4v-1.4h2.4z" fill="#1e222a"/></svg><svg width="9" height="9" viewBox="0 0 9 9" style="left:16.4px;top:241.3px"><rect x="2.4" y=".8" width="5.8" height="7" fill="#3f78c0" stroke="#2a4f86" stroke-width=".5"/><rect x="3.6" y="1.6" width="3.4" height="2.4" fill="#e6eef8"/><path d="M.6,4.4l4,3" stroke="#d8923a" stroke-width="1.6"/></svg><svg width="9" height="9" viewBox="0 0 9 9" style="left:16.4px;top:252.0px"><rect x=".8" y="5" width="7.4" height="3.2" fill="#5a6272" stroke="#2e3440" stroke-width=".5"/><path d="M1.4,5v-2.6h3.4" stroke="#485060" fill="none" stroke-width=".95"/><path d="M5.6,1.2l1,1.2l1,-1.2" stroke="#485060" fill="none" stroke-width=".95"/></svg><div class="a" style="left:16.6px;top:215px;width:8.6px;height:.8px;background:#9fb0cf"></div>
<div id="canvas" class="a"><svg width="650" height="520" viewBox="0 0 650 520" style="left:-39.6px;top:-61.1px">
<defs><clipPath id="c1"><rect x="338" y="61" width="16.6" height="70"/></clipPath><clipPath id="c2"><rect x="40" y="302" width="24.5" height="34"/></clipPath><clipPath id="c3"><rect x="450" y="302" width="200" height="34"/></clipPath></defs>
<rect x="338" y="61" width="16.6" height="70" fill="#050c0c"/>
<g clip-path="url(#c1)" stroke="#86aaa4" stroke-width=".8"><line x1="338" y1="52.6" x2="354.6" y2="37.6"/><line x1="338" y1="62.3" x2="354.6" y2="47.3"/><line x1="338" y1="72.0" x2="354.6" y2="57.0"/><line x1="338" y1="81.7" x2="354.6" y2="66.7"/><line x1="338" y1="91.4" x2="354.6" y2="76.4"/><line x1="338" y1="101.1" x2="354.6" y2="86.1"/><line x1="338" y1="110.8" x2="354.6" y2="95.8"/><line x1="338" y1="120.5" x2="354.6" y2="105.5"/><line x1="338" y1="130.2" x2="354.6" y2="115.2"/><line x1="338" y1="139.9" x2="354.6" y2="124.9"/><line x1="338" y1="149.6" x2="354.6" y2="134.6"/><line x1="338" y1="159.3" x2="354.6" y2="144.3"/></g>
<line x1="337.9" y1="61" x2="337.9" y2="131" stroke="#cfcfcf" stroke-width="1.3" />
<line x1="354.6" y1="61" x2="354.6" y2="131" stroke="#cfcfcf" stroke-width="1.3" />
<rect x="40" y="302" width="24.5" height="34" fill="#050c0c"/>
<g clip-path="url(#c2)" stroke="#5f9a90" stroke-width=".8"><line x1="40" y1="245.8" x2="65" y2="270.8"/><line x1="40" y1="255.8" x2="65" y2="280.8"/><line x1="40" y1="265.8" x2="65" y2="290.8"/><line x1="40" y1="275.8" x2="65" y2="300.8"/><line x1="40" y1="285.8" x2="65" y2="310.8"/><line x1="40" y1="295.8" x2="65" y2="320.8"/><line x1="40" y1="305.8" x2="65" y2="330.8"/><line x1="40" y1="315.8" x2="65" y2="340.8"/><line x1="40" y1="325.8" x2="65" y2="350.8"/><line x1="40" y1="335.8" x2="65" y2="360.8"/><line x1="40" y1="345.8" x2="65" y2="370.8"/><line x1="40" y1="355.8" x2="65" y2="380.8"/></g>
<line x1="40" y1="302" x2="200" y2="302" stroke="#c4c4c4" stroke-width="1.2" />
<line x1="40" y1="336.2" x2="200" y2="336.2" stroke="#e4e4e4" stroke-width="1.2" />
<line x1="64.8" y1="302" x2="64.8" y2="336" stroke="#d0d0d0" stroke-width="1.3" />
<line x1="102.5" y1="291" x2="102.5" y2="352.5" stroke="#7c1616" stroke-width="0.8" />
<rect x="450" y="302" width="200" height="34" fill="#050d0d"/>
<g clip-path="url(#c3)" stroke-width=".7"><line x1="397" y1="302" x2="431" y2="336" stroke="#3f6a64"/><line x1="407" y1="302" x2="441" y2="336" stroke="#7d9894"/><line x1="417" y1="302" x2="451" y2="336" stroke="#3f6a64"/><line x1="427" y1="302" x2="461" y2="336" stroke="#7d9894"/><line x1="437" y1="302" x2="471" y2="336" stroke="#3f6a64"/><line x1="447" y1="302" x2="481" y2="336" stroke="#7d9894"/><line x1="457" y1="302" x2="491" y2="336" stroke="#3f6a64"/><line x1="467" y1="302" x2="501" y2="336" stroke="#7d9894"/><line x1="477" y1="302" x2="511" y2="336" stroke="#3f6a64"/><line x1="487" y1="302" x2="521" y2="336" stroke="#7d9894"/><line x1="497" y1="302" x2="531" y2="336" stroke="#3f6a64"/><line x1="507" y1="302" x2="541" y2="336" stroke="#7d9894"/><line x1="517" y1="302" x2="551" y2="336" stroke="#3f6a64"/><line x1="527" y1="302" x2="561" y2="336" stroke="#7d9894"/><line x1="537" y1="302" x2="571" y2="336" stroke="#3f6a64"/><line x1="547" y1="302" x2="581" y2="336" stroke="#7d9894"/><line x1="557" y1="302" x2="591" y2="336" stroke="#3f6a64"/><line x1="567" y1="302" x2="601" y2="336" stroke="#7d9894"/><line x1="577" y1="302" x2="611" y2="336" stroke="#3f6a64"/><line x1="587" y1="302" x2="621" y2="336" stroke="#7d9894"/><line x1="597" y1="302" x2="631" y2="336" stroke="#3f6a64"/><line x1="607" y1="302" x2="641" y2="336" stroke="#7d9894"/><line x1="617" y1="302" x2="651" y2="336" stroke="#3f6a64"/><line x1="627" y1="302" x2="661" y2="336" stroke="#7d9894"/><line x1="637" y1="302" x2="671" y2="336" stroke="#3f6a64"/><line x1="647" y1="302" x2="681" y2="336" stroke="#7d9894"/><line x1="657" y1="302" x2="691" y2="336" stroke="#3f6a64"/><line x1="667" y1="302" x2="701" y2="336" stroke="#7d9894"/><line x1="677" y1="302" x2="711" y2="336" stroke="#3f6a64"/><line x1="687" y1="302" x2="721" y2="336" stroke="#7d9894"/></g>
<line x1="450" y1="301.6" x2="650" y2="301.6" stroke="#b4b4b4" stroke-width="1.3" />
<line x1="450" y1="336" x2="650" y2="336" stroke="#eaeaea" stroke-width="1.4" />
<line x1="621" y1="336" x2="621" y2="466" stroke="#c8c8c8" stroke-width="1.3" />
<polygon points="620.5,336 632,336 620.5,347.5" fill="#f4f4f4"/>
<line x1="414" y1="370" x2="414" y2="466" stroke="#f0f0f0" stroke-width="1" />
<line x1="513.7" y1="61" x2="513.7" y2="380" stroke="#a61c1c" stroke-width="1" stroke-dasharray="40 2 3 2"/>
<line x1="469" y1="94.5" x2="558" y2="94.5" stroke="#a61c1c" stroke-width="1" />
<line x1="636.5" y1="164.5" x2="650" y2="164.5" stroke="#a61c1c" stroke-width="1.2" />
<line x1="534.3" y1="410" x2="534.3" y2="466" stroke="#a61c1c" stroke-width="1" stroke-dasharray="14 2 3 2"/>
<line x1="489" y1="457" x2="578" y2="457" stroke="#a61c1c" stroke-width="0.8" stroke-dasharray="20 2 3 2"/>
<circle cx="513.8" cy="94.5" r="34.6" fill="none" stroke="#e6e6e6" stroke-width="1.3"/>
<circle cx="534.1" cy="457" r="35.5" fill="none" stroke="#e6e6e6" stroke-width="1.3"/>
<line x1="558" y1="94.5" x2="609.7" y2="94.5" stroke="#1fc41f" stroke-width="0.85" />
<line x1="596" y1="61" x2="596" y2="94.5" stroke="#1fc41f" stroke-width="0.85" />
<polygon points="592.8,67 599.2,67 596,93.5" fill="#22e022"/>
<line x1="295" y1="62" x2="295" y2="102.5" stroke="#1fc41f" stroke-width="0.85" />
<polygon points="295,62 298.5,88 291.5,88" fill="#22e022"/>
<line x1="503.3" y1="61" x2="541.3" y2="181.3" stroke="#1fc41f" stroke-width="0.85" />
<line x1="541.3" y1="181.3" x2="629" y2="181.3" stroke="#1fc41f" stroke-width="0.85" />
<polygon points="524.6,128.0 529.2,153.8 535.7,151.8" fill="#22e022"/>
<line x1="267" y1="410.4" x2="379" y2="410.4" stroke="#1fc41f" stroke-width="1" />
<line x1="379" y1="410.4" x2="572" y2="467.4" stroke="#1fc41f" stroke-width="0.85" />
<line x1="578" y1="457" x2="650" y2="457" stroke="#1fc41f" stroke-width="0.85" />
<polygon points="500.0,447.0 523.9,457.7 525.9,451.0" fill="#22e022"/>
<polygon points="568.1,467.1 542.2,463.1 544.2,456.4" fill="#22e022"/>
<line x1="243.3" y1="67.3" x2="268" y2="67.3" stroke="#c8c8c8" stroke-width="1" />
<line x1="255.6" y1="61" x2="255.6" y2="79.6" stroke="#c8c8c8" stroke-width="1" />
<rect x="252.7" y="64.4" width="5.8" height="5.8" fill="none" stroke="#9cc8c0" stroke-width=".9"/>
<defs><radialGradient id="gb" cx=".4" cy=".35" r=".7"><stop offset="0" stop-color="#9df0a0"/><stop offset=".5" stop-color="#3fd04f"/><stop offset="1" stop-color="#1f9a33"/></radialGradient></defs>
<circle cx="649" cy="272" r="10.5" fill="url(#gb)"/><text x="644.4" y="273.6" font-size="5" fill="#f4fff4" font-family="Liberation Sans,sans-serif">72</text>
<text font-family="Liberation Sans,sans-serif" font-size="100" fill="#3fe03f" stroke="#000" stroke-width="1.5" vector-effect="non-scaling-stroke" style="paint-order:fill stroke" transform="translate(554.88,177.19) scale(0.2549,0.3615)">2</text>
<text font-family="Liberation Sans,sans-serif" font-size="100" fill="#3fe03f" stroke="#000" stroke-width="2.5" vector-effect="non-scaling-stroke" style="paint-order:fill stroke" transform="translate(568.39,182.85) scale(0.3806,0.5495)">×</text>
<text font-family="Liberation Sans,sans-serif" font-size="100" fill="#3fe03f" stroke="#000" stroke-width="1.2" vector-effect="non-scaling-stroke" style="paint-order:fill stroke" transform="translate(590.54,176.72) scale(0.1893,0.3536)">Ø</text>
<text font-family="Liberation Sans,sans-serif" font-size="100" fill="#3fe03f" stroke="#000" stroke-width="1.5" vector-effect="non-scaling-stroke" style="paint-order:fill stroke" transform="translate(604.40,177.19) scale(0.2308,0.3615)">2</text>
<text font-family="Liberation Sans,sans-serif" font-size="100" fill="#3fe03f" stroke="#000" stroke-width="1.5" vector-effect="non-scaling-stroke" style="paint-order:fill stroke" transform="translate(617.58,177.03) scale(0.2222,0.3593)">0</text>
<text font-family="Liberation Sans,sans-serif" font-size="100" fill="#3fe03f" stroke="#000" stroke-width="1.5" vector-effect="non-scaling-stroke" style="paint-order:fill stroke" transform="translate(264.70,407.29) scale(0.2703,0.3687)">2</text>
<text font-family="Liberation Sans,sans-serif" font-size="100" fill="#3fe03f" stroke="#000" stroke-width="2.5" vector-effect="non-scaling-stroke" style="paint-order:fill stroke" transform="translate(278.89,412.00) scale(0.3806,0.4910)">×</text>
<text font-family="Liberation Sans,sans-serif" font-size="100" fill="#3fe03f" stroke="#000" stroke-width="1.2" vector-effect="non-scaling-stroke" style="paint-order:fill stroke" transform="translate(301.29,406.90) scale(0.1751,0.3617)">Ø</text>
<text font-family="Liberation Sans,sans-serif" font-size="100" fill="#3fe03f" stroke="#000" stroke-width="1.5" vector-effect="non-scaling-stroke" style="paint-order:fill stroke" transform="translate(314.43,407.29) scale(0.2440,0.3687)">2</text>
<text font-family="Liberation Sans,sans-serif" font-size="100" fill="#3fe03f" stroke="#000" stroke-width="1.5" vector-effect="non-scaling-stroke" style="paint-order:fill stroke" transform="translate(327.72,407.12) scale(0.2138,0.3663)">0</text>
<text font-family="Liberation Sans,sans-serif" font-size="100" fill="#3fe03f" stroke="#000" stroke-width="1.5" vector-effect="non-scaling-stroke" style="paint-order:fill stroke" transform="translate(338.11,407.29) scale(0.4105,0.3774)">.</text>
<text font-family="Liberation Sans,sans-serif" font-size="100" fill="#3fe03f" stroke="#000" stroke-width="1.5" vector-effect="non-scaling-stroke" style="paint-order:fill stroke" transform="translate(352.75,407.12) scale(0.2495,0.3687)">5</text>
</svg></div>
<div class="a" style="left:0;top:466.2px;width:650px;height:22px;background:#bfd2ea"></div><div class="a" style="left:39.6px;top:466.3px;width:611px;height:9.4px;background:linear-gradient(#cddbef,#c3d4eb)"></div><svg width="4" height="4" viewBox="0 0 4 4" style="left:41.6px;top:468.8px"><path d="M3.6,0v4l-2.6,-2z" fill="#5a6880"/><rect x="0" y="0" width=".8" height="4" fill="#5a6880"/></svg><svg width="4" height="4" viewBox="0 0 4 4" style="left:49.4px;top:468.8px"><path d="M3,0v4l-2.6,-2z" fill="#5a6880"/></svg><svg width="4" height="4" viewBox="0 0 4 4" style="left:58px;top:468.8px"><path d="M0,0v4l2.6,-2z" fill="#5a6880"/></svg><svg width="4" height="4" viewBox="0 0 4 4" style="left:65.6px;top:468.8px"><path d="M0,0v4l2.6,-2z" fill="#5a6880"/><rect x="2.6" y="0" width=".8" height="4" fill="#5a6880"/></svg><svg width="24" height="9" viewBox="0 0 24 9" style="left:71.4px;top:466.2px"><path d="M.4,0h22.6l-3.4,8.2h-17.2q-2,0 -2,-2z" fill="#f8fafd" stroke="#9fb0cf" stroke-width=".6"/></svg><div class="t" style="left:76.6px;top:467.50px;font-size:5.8px;color:#111;font-weight:bold">模型</div><div class="a" style="left:2px;top:476px;width:16.6px;height:10.4px;background:linear-gradient(#f2f5fa,#dde6f3);border:.6px solid #aebcd6;border-radius:1px"></div><div class="a" style="left:0;top:487.8px;width:650px;height:12.2px;background:linear-gradient(#d6e1f2,#c6d4ea);border-top:.8px solid #e4ecf7"></div><div class="t" style="left:5px;top:491.20px;font-size:5.6px;color:#222;">命令:</div><div class="a" style="left:393px;top:489.4px;width:.8px;height:9.4px;background:#a9b9d3"></div><div class="t" style="left:406px;top:491.00px;font-size:5.8px;color:#333;">空命令</div><div class="t" style="left:457.2px;top:491.15px;font-size:5.5px;color:#333;">X:-189.250, Y:175.677</div><div class="t" style="left:554px;top:491.00px;font-size:5.8px;color:#333;">正交</div><div class="a" style="left:570px;top:489.6px;width:20.4px;height:9px;background:linear-gradient(#fde9a8,#f8cf6a);border:.7px solid #dba43a;border-radius:1px"></div><div class="t" style="left:574.2px;top:491.00px;font-size:5.8px;color:#222;">线宽</div><div class="t" style="left:596.2px;top:491.00px;font-size:5.8px;color:#333;">动态输入</div><div class="t" style="left:629.4px;top:491.00px;font-size:5.8px;color:#333;">智能</div><svg width="4" height="3" viewBox="0 0 4 3" style="left:644.6px;top:493px"><path d="M0,0h3.6l-1.8,2.4z" fill="#5f6f8c"/></svg>
<div id="task" class="a"></div><div class="a" style="left:0;top:500px;width:650px;height:1px;background:#76859f"></div><div class="a" style="left:92.4px;top:500.6px;width:29.6px;height:19.4px;background:linear-gradient(rgba(255,255,255,.62),rgba(235,244,253,.42) 45%,rgba(210,228,248,.35));border:.8px solid rgba(255,255,255,.7);border-bottom:0;border-radius:2px 2px 0 0;box-shadow:0 0 0 .6px rgba(90,120,170,.5)"></div><div class="a" style="left:123px;top:500.6px;width:31.6px;height:19.4px;background:linear-gradient(rgba(255,255,255,.62),rgba(235,244,253,.42) 45%,rgba(210,228,248,.35));border:.8px solid rgba(255,255,255,.7);border-bottom:0;border-radius:2px 2px 0 0;box-shadow:0 0 0 .6px rgba(90,120,170,.5)"></div><div class="a" style="left:155.6px;top:500.6px;width:29.4px;height:19.4px;background:linear-gradient(rgba(255,255,255,.62),rgba(235,244,253,.42) 45%,rgba(210,228,248,.35));border:.8px solid rgba(255,255,255,.7);border-bottom:0;border-radius:2px 2px 0 0;box-shadow:0 0 0 .6px rgba(90,120,170,.5)"></div><div class="a" style="left:218.6px;top:500.6px;width:29.8px;height:19.4px;background:linear-gradient(rgba(255,255,255,.62),rgba(235,244,253,.42) 45%,rgba(210,228,248,.35));border:.8px solid rgba(255,255,255,.7);border-bottom:0;border-radius:2px 2px 0 0;box-shadow:0 0 0 .6px rgba(90,120,170,.5)"></div><div class="a" style="left:314.6px;top:500.6px;width:28.6px;height:19.4px;background:linear-gradient(rgba(255,255,255,.62),rgba(235,244,253,.42) 45%,rgba(210,228,248,.35));border:.8px solid rgba(255,255,255,.7);border-bottom:0;border-radius:2px 2px 0 0;box-shadow:0 0 0 .6px rgba(90,120,170,.5)"></div><div class="a" style="left:344.2px;top:500.6px;width:30.2px;height:19.4px;background:linear-gradient(rgba(255,255,255,.62),rgba(235,244,253,.42) 45%,rgba(210,228,248,.35));border:.8px solid rgba(255,255,255,.7);border-bottom:0;border-radius:2px 2px 0 0;box-shadow:0 0 0 .6px rgba(90,120,170,.5)"></div><svg width="18" height="18" viewBox="0 0 18 18" style="left:5px;top:501.5px"><defs><radialGradient id="orb" cx=".5" cy=".3" r=".75"><stop offset="0" stop-color="#8fd0f6"/><stop offset=".45" stop-color="#2f7fcf"/><stop offset="1" stop-color="#123a78"/></radialGradient></defs><circle cx="9" cy="9" r="8.6" fill="url(#orb)" stroke="#2a4f86" stroke-width=".6"/><path d="M4.4,5.6q2,-1 3.8,0v3q-1.8,-1 -3.8,0z" fill="#e8502e"/><path d="M9,5.8q2,1 3.8,0v3q-1.8,1 -3.8,0z" fill="#7fc23a"/><path d="M4.4,9.4q2,-1 3.8,0v3q-1.8,-1 -3.8,0z" fill="#3aa0e8"/><path d="M9,9.6q2,1 3.8,0v3q-1.8,1 -3.8,0z" fill="#f6c83a"/><ellipse cx="9" cy="4.4" rx="6" ry="3" fill="rgba(255,255,255,.35)"/></svg><svg width="15" height="15" viewBox="0 0 15 15" style="left:35.6px;top:502.4px"><rect x=".6" y=".8" width="6.6" height="6.6" rx="2.4" fill="#8cc63a"/><rect x="7.8" y=".6" width="6.6" height="6.6" rx="2.4" fill="#4a8fe0"/><rect x=".6" y="7.8" width="6.6" height="6.6" rx="2.4" fill="#f0c030"/><rect x="7.8" y="7.8" width="6.6" height="6.6" rx="2.4" fill="#e0503a"/></svg><svg width="15" height="15" viewBox="0 0 15 15" style="left:69.6px;top:502.6px"><circle cx="7.5" cy="8" r="5.2" fill="none" stroke="#3fa0e8" stroke-width="2.6"/><rect x="7" y="7.2" width="7" height="2.2" fill="#a9cbee"/><path d="M3.4,7.4h8.6" stroke="#3fa0e8" stroke-width="1.8"/><ellipse cx="7.5" cy="7" rx="7.6" ry="3" fill="none" stroke="#f0c63a" stroke-width="1.1" transform="rotate(-28 7.5 7)"/></svg><svg width="18" height="15" viewBox="0 0 18 15" style="left:98.6px;top:502.6px"><path d="M1,2.4h6l1.2,1.4h8.6v10h-15.8z" fill="#f4dc8a" stroke="#c8a84a" stroke-width=".6"/><rect x="2.6" y="5" width="12.6" height="6" fill="#fbf3cf"/><rect x="3" y="8.6" width="12" height="5" fill="#8fc0e8" stroke="#5a90c0" stroke-width=".5"/><rect x="5" y="11.4" width="8" height="2.4" fill="#6aa6d8"/></svg><svg width="14" height="14" viewBox="0 0 14 14" style="left:131.4px;top:503px"><rect x=".8" y=".8" width="12.4" height="12.4" rx="1.4" fill="#9fb8d8" stroke="#6a86ad" stroke-width=".6"/><circle cx="7" cy="7" r="4.8" fill="#f09030" stroke="#c86a1a" stroke-width=".6"/><path d="M5.4,4.4l4.2,2.6l-4.2,2.6z" fill="#fff"/></svg><svg width="16" height="16" viewBox="0 0 16 16" style="left:161.4px;top:502.4px"><circle cx="8" cy="8.4" r="5" fill="none" stroke="#5cc03a" stroke-width="2.8"/><rect x="7.6" y="7.8" width="7" height="2.2" fill="#cfe2f6"/><path d="M4,7.8h8.6" stroke="#5cc03a" stroke-width="1.8"/><ellipse cx="8" cy="7.4" rx="8" ry="3" fill="none" stroke="#8fd84a" stroke-width="1.1" transform="rotate(-28 8 7.4)"/></svg><svg width="16" height="16" viewBox="0 0 16 16" style="left:194px;top:502.6px"><circle cx="8" cy="8" r="7.2" fill="#f2f2f2"/><path d="M8,8l-7.2,0a7.2,7.2 0 0 1 5,-6.8z" fill="#f0c02e"/><path d="M8,8l-2.2,-6.8a7.2,7.2 0 0 1 8.8,3.6z" fill="#e8483a"/><path d="M8,8l6.6,-3.2a7.2,7.2 0 0 1 -2.4,9z" fill="#4a9ae8"/><path d="M8,8l4.2,5.8a7.2,7.2 0 0 1 -11.4,-5.8z" fill="#5cc03a"/><circle cx="8" cy="8" r="2.2" fill="#fdfdfd"/></svg><svg width="16" height="15" viewBox="0 0 16 15" style="left:225.4px;top:502.6px"><rect x="4" y=".8" width="11" height="13" fill="#fdfdfd" stroke="#8a96aa" stroke-width=".6"/><path d="M6,3.4h7.4M6,5.4h7.4M6,7.4h7.4M6,9.4h7.4M6,11.4h7.4" stroke="#7a86a0" stroke-width=".7"/><rect x=".8" y="3" width="7.6" height="8.4" fill="#2f5fa8" stroke="#1e3f78" stroke-width=".5"/><text x="1.4" y="9.8" font-size="7" font-weight="bold" fill="#fff" font-family="Liberation Sans,sans-serif">W</text></svg><svg width="16" height="16" viewBox="0 0 16 16" style="left:257px;top:502.4px"><circle cx="8" cy="8" r="7.4" fill="#e8483a"/><path d="M8,8l-6.4,-3.7a7.4,7.4 0 0 0 3.4,10.6z" fill="#4aa84a"/><path d="M8,8l-3,6.9a7.4,7.4 0 0 0 10.4,-6.9z" fill="#f2c42e"/><circle cx="8" cy="8" r="3.4" fill="#fdfdfd"/><circle cx="8" cy="8" r="2.6" fill="#4a8fe0"/></svg><svg width="18" height="16" viewBox="0 0 18 16" style="left:288px;top:501.8px"><rect x=".4" y=".4" width="17" height="15" rx="3.4" fill="#2f8fd8" stroke="#1e5fa0" stroke-width=".6"/><circle cx="8.6" cy="7.6" r="5" fill="#e8f2fb"/><circle cx="8.6" cy="7.6" r="3" fill="#3a7fc8"/><circle cx="8.6" cy="7.6" r="1.4" fill="#d8b84a"/><rect x="3.8" y="9" width="3" height="5.4" fill="#e8f2fb"/></svg><svg width="14" height="16" viewBox="0 0 14 16" style="left:321.6px;top:502.4px"><circle cx="7" cy="5.8" r="5.4" fill="#d8302a" stroke="#a01e1a" stroke-width=".5"/><rect x="4.4" y="3.4" width="5.2" height="4.6" rx=".8" fill="none" stroke="#fbe9e6" stroke-width="1"/><rect x="2" y="12.2" width="10" height="2.6" fill="#d8403a"/></svg><svg width="17" height="17" viewBox="0 0 17 17" style="left:352.6px;top:502px"><path d="M2,2l4,3l-1,2z" fill="#2f8fd8"/><circle cx="8.6" cy="7" r="5" fill="#5ab8e8" stroke="#2f8fd0" stroke-width=".8"/><circle cx="8.6" cy="7" r="2.6" fill="#d6effa"/><path d="M4.4,10.6l-1.6,4.6l3,-2.4zM12,10.6l2.4,4l-3.8,-1.6z" fill="#2f8fd8"/><path d="M7,12.6l2,3l2,-3z" fill="#f0a030"/></svg><div class="t" style="left:468px;top:504.30px;font-size:5.4px;color:#f4f8ff;">CH</div><div class="a" style="left:479.4px;top:505.4px;width:7.4px;height:3.6px;background:#c9d6ea;border-radius:.6px;opacity:.85"></div><svg width="8" height="8" viewBox="0 0 8 8" style="left:491.2px;top:503.4px"><circle cx="4" cy="4" r="3.6" fill="#2f5fc0" stroke="#e8f0fb" stroke-width=".6"/><text x="2.4" y="6.2" font-size="5.6" font-weight="bold" fill="#fff" font-family="Liberation Sans,sans-serif">?</text></svg><div class="a" style="left:505px;top:503.4px;width:2.4px;height:6px;background:#dfe8f6;opacity:.8"></div><div class="a" style="left:521px;top:504.4px;width:7px;height:7.6px;background:#5fbf3a;border-radius:2px;opacity:.8"></div><div class="a" style="left:533px;top:504.4px;width:7px;height:7.6px;background:#e8902a;border-radius:2px;opacity:.8"></div><div class="a" style="left:545px;top:504.4px;width:7px;height:7.6px;background:#e0c23a;border-radius:2px;opacity:.8"></div><div class="a" style="left:557.6px;top:504.4px;width:7px;height:7.6px;background:#e8e8e8;border-radius:2px;opacity:.8"></div><div class="a" style="left:569px;top:504.4px;width:7px;height:7.6px;background:#e0402a;border-radius:2px;opacity:.8"></div><div class="a" style="left:581px;top:504.4px;width:7px;height:7.6px;background:#d8d8e8;border-radius:2px;opacity:.8"></div><div class="a" style="left:595px;top:504.4px;width:7px;height:7.6px;background:#cfd8ea;border-radius:2px;opacity:.8"></div><div class="t" style="left:618.4px;top:500.80px;font-size:5.6px;color:#f4f8ff;">13:26</div><div class="t" style="left:612px;top:509.00px;font-size:5.2px;color:#e4ecf8;">2013/9/5</div><div class="t" style="left:519.6px;top:501.4px;font-family:'Liberation Mono',monospace;font-size:16.67px;color:#d8262e;line-height:19px;text-shadow:.3px 0 0 #d8262e">www.ttcad.com</div>
<div id="dlg" class="a"><div id="dtitle" class="a"></div><div class="a" style="left:138px;top:0;width:18px;height:15px;background:rgba(190,205,205,.22);filter:blur(1.6px)"></div>
<div class="a" style="left:2px;top:2.4px;width:29px;height:9.6px;border-radius:4px;background:rgba(215,220,225,.5);filter:blur(1.6px)"></div><div class="t" style="left:3.6px;top:3.4px;font-size:6px;color:#0c0d0f;font-weight:500;text-shadow:0 0 1.5px #d4d8dc,0 0 2.5px #c4c8cc">焊接符号</div>
<div class="a" style="left:225.5px;top:0;width:23.5px;height:8.5px;border-radius:0 0 2px 2px;background:linear-gradient(#e0a090,#cf5a45 45%,#b8321c 55%,#c9503a);border:1px solid #6a2a20;border-top:0"></div>
<div class="t" style="left:234px;top:1.2px;font-size:6.5px;font-weight:bold;color:#fff">x</div>
<div id="dcl" class="a"></div>
<div class="a" style="left:5.5px;top:17.2px;width:132px;height:50.4px;background:#000"></div>
<div class="a" style="left:146px;top:17.2px;width:95.2px;height:50.4px;background:#c0c0c0"></div>
<svg width="254" height="247" viewBox="200 128 254 247" style="left:0;top:0"><g stroke="#f0f0f0" stroke-width=".9" fill="none"><circle cx="256.4" cy="178.2" r="4.2"/><line x1="256.4" y1="178.3" x2="301.5" y2="178.3"/><line x1="260" y1="180.9" x2="301.5" y2="180.9" stroke-dasharray="2.6 1.4"/><polyline points="271.5,178.3 271.5,169 281,178.3"/><path d="M270.2,163 Q276.3,158 282.6,163"/><line x1="253.4" y1="181.2" x2="242.5" y2="192.3" stroke-width=".7"/></g><polygon points="242.6,192.2 249.6,184.3 251.2,185.7" fill="#f4f4f4"/><text font-family="Liberation Sans,sans-serif" font-size="100" fill="#f2f2f2" stroke="#000" stroke-width=".35" vector-effect="non-scaling-stroke" style="paint-order:fill stroke" transform="translate(273.37,157.81) scale(0.1002,0.1033)">8</text><text font-family="Liberation Sans,sans-serif" font-size="100" fill="#f2f2f2" stroke="#000" stroke-width=".35" vector-effect="non-scaling-stroke" style="paint-order:fill stroke" transform="translate(283.88,175.59) scale(0.0981,0.1174)">8</text><g stroke="#1a1a1a" fill="none"><polyline points="439.6,167.6 365.4,167.6 347.2,185.6" stroke-width="1.3"/><line x1="367" y1="171.3" x2="439.3" y2="171.3" stroke-width="1.2" stroke-dasharray="7.4 3.2"/></g><polygon points="346.4,186.6 348.6,180.6 352.4,184.4" fill="#111"/></svg>
<div class="t" style="left:192.4px;top:20.00px;font-size:8px;color:#1e1e1e;">上尺寸</div>
<div class="t" style="left:169.6px;top:30.00px;font-size:8px;color:#1e1e1e;word-spacing:.85px">左尺寸 符号 右尺寸</div>
<div class="t" style="left:169.6px;top:46.80px;font-size:8px;color:#1e1e1e;word-spacing:.85px">左尺寸 符号 右尺寸</div>
<div class="t" style="left:192.4px;top:57.60px;font-size:8px;color:#1e1e1e;">上尺寸</div>
<div class="gb" style="left:6px;top:75.5px;width:71px;height:66.0px"></div>
<div class="t" style="left:8.4px;top:72.60px;font-size:6px;color:#222;background:#f0f0f0;padding:0 1px;">基本符号</div>
<div class="gb" style="left:80px;top:75.5px;width:73.5px;height:37.0px"></div>
<div class="t" style="left:82.2px;top:72.60px;font-size:6px;color:#222;background:#f0f0f0;padding:0 1px;">辅助符号</div>
<div class="gb" style="left:155.5px;top:75.5px;width:85.5px;height:37.0px"></div>
<div class="t" style="left:157.2px;top:72.60px;font-size:6px;color:#222;background:#f0f0f0;padding:0 1px;">补充符号</div>
<div class="gb" style="left:80px;top:120px;width:86.5px;height:21.5px"></div>
<div class="t" style="left:82.2px;top:117.20px;font-size:6px;color:#222;background:#f0f0f0;padding:0 1px;">特殊符号</div>
<div class="gb" style="left:172px;top:120.5px;width:69px;height:21.0px"></div>
<div class="t" style="left:174.8px;top:117.60px;font-size:6px;color:#222;background:#f0f0f0;padding:0 1px;">符号位置</div>
<div class="sb" style="left:9.4px;top:82px"><svg width="13" height="10.4" viewBox="0 0 13 10.4" style="left:-1px;top:-.6px"><g fill="none" stroke="#2e2e2e" stroke-width=".65" ><path d="M2.5,8 Q6,7.5 6,3 M10.5,8 Q7,7.5 7,3"/></g></svg></div>
<div class="sb" style="left:26.07px;top:82px"><svg width="13" height="10.4" viewBox="0 0 13 10.4" style="left:-1px;top:-.6px"><g fill="none" stroke="#2e2e2e" stroke-width=".65" ><path d="M5,3v5M8,3v5"/></g></svg></div>
<div class="sb" style="left:42.74px;top:82px"><svg width="13" height="10.4" viewBox="0 0 13 10.4" style="left:-1px;top:-.6px"><g fill="none" stroke="#2e2e2e" stroke-width=".65" ><path d="M4,3l2.5,5l2.5,-5"/></g></svg></div>
<div class="sb" style="left:59.41px;top:82px"><svg width="13" height="10.4" viewBox="0 0 13 10.4" style="left:-1px;top:-.6px"><g fill="none" stroke="#2e2e2e" stroke-width=".65" ><path d="M5,2.5v5.5M5,8l4,-5.5"/></g></svg></div>
<div class="sb" style="left:9.4px;top:96.6px"><svg width="13" height="10.4" viewBox="0 0 13 10.4" style="left:-1px;top:-.6px"><g fill="none" stroke="#2e2e2e" stroke-width=".65" ><path d="M4,2.5l2.5,3l2.5,-3M6.5,5.5v3"/></g></svg></div>
<div class="sb" style="left:26.07px;top:96.6px"><svg width="13" height="10.4" viewBox="0 0 13 10.4" style="left:-1px;top:-.6px"><g fill="none" stroke="#2e2e2e" stroke-width=".65" ><path d="M5,2.5v6M5,6l3.5,-3.5"/></g></svg></div>
<div class="sb" style="left:42.74px;top:96.6px"><svg width="13" height="10.4" viewBox="0 0 13 10.4" style="left:-1px;top:-.6px"><g fill="none" stroke="#2e2e2e" stroke-width=".65" ><path d="M4,2.5q0,3 2.5,3q2.5,0 2.5,-3M6.5,5.5v3"/></g></svg></div>
<div class="sb" style="left:59.41px;top:96.6px"><svg width="13" height="10.4" viewBox="0 0 13 10.4" style="left:-1px;top:-.6px"><g fill="none" stroke="#2e2e2e" stroke-width=".65" ><path d="M5,2.5v6M5,6.5q3,0 3.5,-4"/></g></svg></div>
<div class="sb" style="left:9.4px;top:111.2px"><svg width="13" height="10.4" viewBox="0 0 13 10.4" style="left:-1px;top:-.6px"><g fill="none" stroke="#2e2e2e" stroke-width=".65" ><path d="M3,4h7M3,6q0,2 2,2h3q2,0 2,-2" /></g></svg></div>
<div class="sb sel" style="left:26.07px;top:111.2px"><svg width="13" height="10.4" viewBox="0 0 13 10.4" style="left:-1px;top:-.6px"><g fill="none" stroke="#2e2e2e" stroke-width=".65" ><path d="M4,2.5v5.5h5.5z"/></g></svg></div>
<div class="sb" style="left:42.74px;top:111.2px"><svg width="13" height="10.4" viewBox="0 0 13 10.4" style="left:-1px;top:-.6px"><g fill="none" stroke="#2e2e2e" stroke-width=".65" ><path d="M3,8v-4.5h7v4.5"/></g></svg></div>
<div class="sb" style="left:59.41px;top:111.2px"><svg width="13" height="10.4" viewBox="0 0 13 10.4" style="left:-1px;top:-.6px"><g fill="none" stroke="#2e2e2e" stroke-width=".65" ><circle cx="6.5" cy="5.2" r="3"/><path d="M2,5.2h9"/></g></svg></div>
<div class="sb" style="left:9.4px;top:126px"><svg width="13" height="10.4" viewBox="0 0 13 10.4" style="left:-1px;top:-.6px"><g fill="none" stroke="#2e2e2e" stroke-width=".65" ><circle cx="6.5" cy="5.2" r="3"/></g></svg></div>
<div class="sb" style="left:26.07px;top:126px"><svg width="13" height="10.4" viewBox="0 0 13 10.4" style="left:-1px;top:-.6px"><g fill="none" stroke="#2e2e2e" stroke-width=".65" ><ellipse cx="6.5" cy="5.2" rx="3.4" ry="2.8" fill="#222"/><path d="M1.8,5.2h9.4"/></g></svg></div>
<div class="sb" style="left:42.74px;top:126px"><svg width="13" height="10.4" viewBox="0 0 13 10.4" style="left:-1px;top:-.6px"><g fill="none" stroke="#2e2e2e" stroke-width=".65" ><ellipse cx="6.5" cy="5.2" rx="3" ry="2.8"/><path d="M2,4.2h9M2,6.2h9"/></g></svg></div>
<div class="sb" style="left:59.41px;top:126px"><div class="t" style="left:2.2px;top:1px;font-size:7.4px;color:#222">无</div></div>
<div class="sb" style="left:83.4px;top:82px"><svg width="13" height="10.4" viewBox="0 0 13 10.4" style="left:-1px;top:-.6px"><g fill="none" stroke="#2e2e2e" stroke-width=".65" ><path d="M3,5.2h7"/></g></svg></div>
<div class="sb" style="left:100.07px;top:82px"><svg width="13" height="10.4" viewBox="0 0 13 10.4" style="left:-1px;top:-.6px"><g fill="none" stroke="#2e2e2e" stroke-width=".65" ><path d="M3.5,2.5l6,5.5"/></g></svg></div>
<div class="sb" style="left:116.74px;top:82px"><svg width="13" height="10.4" viewBox="0 0 13 10.4" style="left:-1px;top:-.6px"><g fill="none" stroke="#2e2e2e" stroke-width=".65" ><path d="M3.5,8l6,-5.5"/></g></svg></div>
<div class="sb" style="left:133.41px;top:82px"><svg width="13" height="10.4" viewBox="0 0 13 10.4" style="left:-1px;top:-.6px"><g fill="none" stroke="#2e2e2e" stroke-width=".65" ><path d="M4,3q1,4 5.5,4.5"/></g></svg></div>
<div class="sb" style="left:83.4px;top:96.6px"><svg width="13" height="10.4" viewBox="0 0 13 10.4" style="left:-1px;top:-.6px"><g fill="none" stroke="#2e2e2e" stroke-width=".65" ><path d="M2.6,4q3.9,3.4 7.8,0"/></g></svg></div>
<div class="sb" style="left:100.07px;top:96.6px"><svg width="13" height="10.4" viewBox="0 0 13 10.4" style="left:-1px;top:-.6px"><g fill="none" stroke="#2e2e2e" stroke-width=".65" ><path d="M4,3.5q3,.5 4.5,4"/></g></svg></div>
<div class="sb sel" style="left:116.74px;top:96.6px"><svg width="13" height="10.4" viewBox="0 0 13 10.4" style="left:-1px;top:-.6px"><g fill="none" stroke="#2e2e2e" stroke-width=".65" ><path d="M3,6.5q3.5,-3.5 7,0"/></g></svg></div>
<div class="sb" style="left:133.41px;top:96.6px"><div class="t" style="left:2.2px;top:1px;font-size:7.4px;color:#222">无</div></div>
<div class="sb" style="left:158.4px;top:82px"><svg width="13" height="10.4" viewBox="0 0 13 10.4" style="left:-1px;top:-.6px"><g fill="none" stroke="#2e2e2e" stroke-width=".65" ><rect x="3.5" y="3.5" width="6" height="3.6"/></g></svg></div>
<div class="sb" style="left:175.07px;top:82px"><svg width="13" height="10.4" viewBox="0 0 13 10.4" style="left:-1px;top:-.6px"><g fill="none" stroke="#2e2e2e" stroke-width=".65" ><path d="M10,3h-6.5v4.5h6.5"/></g></svg></div>
<div class="sb" style="left:191.74px;top:82px"><svg width="13" height="10.4" viewBox="0 0 13 10.4" style="left:-1px;top:-.6px"><g fill="none" stroke="#2e2e2e" stroke-width=".65" ><path d="M4,2.5v5.5h5v-5.5" stroke-width="1"/></g></svg></div>
<div class="sb" style="left:208.41px;top:82px"><svg width="13" height="10.4" viewBox="0 0 13 10.4" style="left:-1px;top:-.6px"><g fill="none" stroke="#2e2e2e" stroke-width=".65" ><path d="M3,3h6.5v4.5h-6.5"/></g></svg></div>
<div class="sb" style="left:225.08px;top:82px"><svg width="13" height="10.4" viewBox="0 0 13 10.4" style="left:-1px;top:-.6px"><g fill="none" stroke="#2e2e2e" stroke-width=".65" ><path d="M4,8.5v-5.5h5v5.5" stroke-width="1"/></g></svg></div>
<div class="sb sel" style="left:158.4px;top:96.6px"><svg width="13" height="10.4" viewBox="0 0 13 10.4" style="left:-1px;top:-.6px"><g fill="none" stroke="#2e2e2e" stroke-width=".65" ><path d="M6.5,2.5l3,2.7l-3,2.7l-3,-2.7z"/></g></svg></div>
<div class="sb" style="left:175.07px;top:96.6px"><svg width="13" height="10.4" viewBox="0 0 13 10.4" style="left:-1px;top:-.6px"><g fill="none" stroke="#2e2e2e" stroke-width=".65" ><path d="M3.5,2v6.5" /><path d="M3.5,2.2l6.5,3.6h-6.5z" fill="#111"/></g></svg></div>
<div class="sb" style="left:191.74px;top:96.6px"><svg width="13" height="10.4" viewBox="0 0 13 10.4" style="left:-1px;top:-.6px"><g fill="none" stroke="#2e2e2e" stroke-width=".65" ><path d="M9.4,2l-5.6,3.4l5.6,3.4"/></g></svg></div>
<div class="sb" style="left:208.41px;top:96.6px"><svg width="13" height="10.4" viewBox="0 0 13 10.4" style="left:-1px;top:-.6px"><g fill="none" stroke="#2e2e2e" stroke-width=".65" ><path d="M5.4,2.2h3.4M8,2.2l-2.4,6M4,8.2h3.4"/></g></svg></div>
<div class="sb" style="left:225.08px;top:96.6px"><div class="t" style="left:2.2px;top:1px;font-size:7.4px;color:#222">无</div></div>
<div class="sb" style="left:83.4px;top:126px"><svg width="13" height="10.4" viewBox="0 0 13 10.4" style="left:-1px;top:-.6px"><g fill="none" stroke="#2e2e2e" stroke-width=".65" ><path d="M3,3q3,.5 3.2,5M10,3q-3,.5 -3.2,5"/></g></svg></div>
<div class="sb" style="left:100.07px;top:126px"><svg width="13" height="10.4" viewBox="0 0 13 10.4" style="left:-1px;top:-.6px"><g fill="none" stroke="#2e2e2e" stroke-width=".65" ><path d="M4.5,2.5v6M9.5,3q-3,.5 -3.2,5"/></g></svg></div>
<div class="sb" style="left:116.74px;top:126px"><svg width="13" height="10.4" viewBox="0 0 13 10.4" style="left:-1px;top:-.6px"><g fill="none" stroke="#2e2e2e" stroke-width=".65" ><path d="M2.2,8h8.6M2.6,7.6q.4,-2.6 2,-2.6q1.6,0 2,2.6q.4,-2.6 2,-2.6q1.6,0 2,2.6"/></g></svg></div>
<div class="sb" style="left:133.41px;top:126px"><svg width="13" height="10.4" viewBox="0 0 13 10.4" style="left:-1px;top:-.6px"><g fill="none" stroke="#2e2e2e" stroke-width=".65" ><path d="M4.5,2v6h5.5M9,2.5l-4.5,4l3.5,1.5"/></g></svg></div>
<div class="sb" style="left:150.08px;top:126px"><svg width="13" height="10.4" viewBox="0 0 13 10.4" style="left:-1px;top:-.6px"><g fill="none" stroke="#2e2e2e" stroke-width=".65" ><path d="M3.5,2.5l3,3l3,-3M6.5,5.5v3h3.5"/></g></svg></div>
<div class="rad on" style="left:176.39999999999998px;top:129.2px"></div>
<div class="t" style="left:184.4px;top:128.85px;font-size:6.9px;color:#222;">上</div>
<div class="rad" style="left:210.39999999999998px;top:129.2px"></div>
<div class="t" style="left:218.2px;top:128.85px;font-size:6.9px;color:#222;">下</div>
<div class="t" style="left:10.2px;top:148.30px;font-size:6px;color:#222;">左尺寸</div>
<div class="t" style="left:49.8px;top:148.30px;font-size:6px;color:#222;">上尺寸</div>
<div class="t" style="left:91.2px;top:148.30px;font-size:6px;color:#222;">右尺寸</div>
<div class="inp" style="left:10.2px;top:157px;width:27.0px;height:9.6px"></div>
<div class="inp" style="left:49.8px;top:157px;width:27.0px;height:9.6px"><div class="t" style="left:2px;top:1.6px;font-size:5.5px;color:#222">8</div></div>
<div class="inp" style="left:91.8px;top:157px;width:27.0px;height:9.6px"><div class="t" style="left:2px;top:1.6px;font-size:5.5px;color:#222">8</div></div>
<div class="t" style="left:124.2px;top:158.70px;font-size:6.2px;color:#3a3a3a;">X</div>
<div class="inp" style="left:136.6px;top:157px;width:26.6px;height:9.6px"></div>
<div class="t" style="left:175.8px;top:148.80px;font-size:6px;color:#222;">焊接说明</div>
<div class="a" style="left:176px;top:156.4px;width:61.8px;height:19.8px;border:.9px solid #c6c6c6;background:#efefef"></div>
<div class="gb" style="left:7px;top:182.5px;width:58.5px;height:37.30000000000001px"></div>
<div class="t" style="left:9.8px;top:179.10px;font-size:6px;color:#222;background:#f0f0f0;padding:0 1px;">交错焊缝</div>
<div class="t" style="left:11px;top:199.20px;font-size:6px;color:#a8a8a8;">间距</div>
<div class="inp dis" style="left:34.4px;top:197.4px;width:27.2px;height:10.4px"></div>
<div class="gb" style="left:69.5px;top:182.5px;width:52.0px;height:37.30000000000001px"></div>
<div class="t" style="left:73px;top:179.10px;font-size:6px;color:#222;background:#f0f0f0;padding:0 1px;">扩充文字</div>
<div class="inp dis" style="left:78.2px;top:197.4px;width:33.6px;height:10.4px"></div>
<div class="gb" style="left:126.5px;top:182.5px;width:40.0px;height:37.30000000000001px"></div>
<div class="t" style="left:129.8px;top:179.10px;font-size:6px;color:#222;background:#f0f0f0;padding:0 1px;">虚线位置</div>
<div class="rad" style="left:135.39999999999998px;top:189.2px"></div>
<div class="t" style="left:143.4px;top:188.75px;font-size:6.5px;color:#222;">上</div>
<div class="rad on" style="left:135.39999999999998px;top:200.0px"></div>
<div class="t" style="left:143.4px;top:199.55px;font-size:6.5px;color:#222;">下</div>
<div class="rad" style="left:135.39999999999998px;top:211.0px"></div>
<div class="t" style="left:143.4px;top:210.55px;font-size:6.5px;color:#222;">无</div>
<div class="btn" style="left:203.2px;top:198.5px;width:36.7px;height:10.2px;font-size:6.1px;line-height:8.2px;">清除行(R)</div>
<div class="btn" style="left:74px;top:227.8px;width:37.8px;height:10.4px;font-size:6.1px;line-height:8.4px;border-color:#5a9cc8;box-shadow:inset 0 0 0 1px #7fd6f6;background:linear-gradient(#eef8fd,#d8edf8 50%,#c2e2f3);">确定(O)</div>
<div class="btn" style="left:149.6px;top:227.8px;width:37.0px;height:10.4px;font-size:6.1px;line-height:8.4px;">取消(C)</div></div>
</body></html>
